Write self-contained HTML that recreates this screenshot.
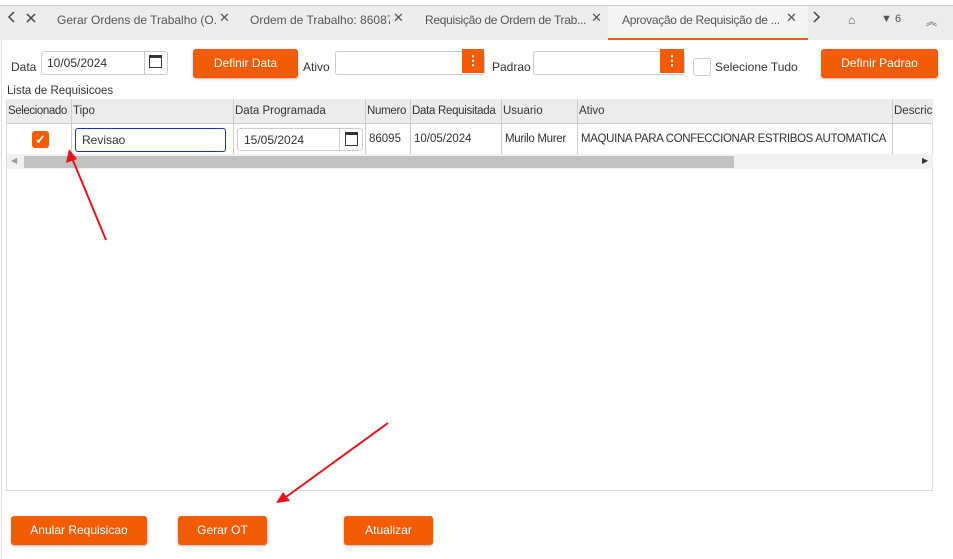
<!DOCTYPE html>
<html><head><meta charset="utf-8"><style>
body{margin:0;width:953px;height:559px;background:#fff;font-family:"Liberation Sans",sans-serif;font-size:12px;color:#333;position:relative;overflow:hidden}
.a{position:absolute}
.tab{position:absolute;top:13px;font-size:12px;color:#555;white-space:nowrap}
.x{position:absolute;top:10px;font-size:13px;color:#555}
.btn{position:absolute;background:#f25c05;color:#fff;border-radius:3px;text-align:center;font-size:12px;box-shadow:0 1px 2px rgba(0,0,0,.3)}
.inp{position:absolute;border:1px solid #ccc;border-radius:3px;background:#fff}
.dots{position:absolute;background:#f25c05;color:#fff;font-weight:bold;text-align:center;font-size:13px}
.th{position:absolute;top:99px;height:25px;line-height:25px;border-right:1px solid #ccc;font-size:11.5px;color:#333;overflow:hidden;white-space:nowrap;padding-left:1px;box-sizing:border-box}
.td{position:absolute;top:124px;height:30px;line-height:30px;border-right:1px solid #ccc;font-size:11.5px;color:#333;overflow:hidden;white-space:nowrap;padding-left:3px;box-sizing:border-box}
</style></head><body>
<div class="a" style="left:0;top:5px;width:953px;height:1px;background:#ccc"></div>
<div class="a" style="left:0;top:6px;width:953px;height:34px;background:#ededed"></div>
<div class="a" style="left:608px;top:6px;width:200px;height:34px;background:#f5f5f5;border-bottom:2px solid #f25c05;box-sizing:border-box"></div>
<div class="a" style="left:808px;top:6px;width:145px;height:32px;background:#ececec"></div>
<svg class="a" style="left:0;top:0" width="953" height="40"><g stroke="#444" stroke-width="1.5" fill="none">
<path d="M14 12 L9 17 L14 22"/><path d="M27 14 L35 22 M35 14 L27 22"/>
<path d="M814 12 L819 17 L814 22"/></g></svg>
<div class="tab" style="left:57px;width:160px;overflow:hidden">Gerar Ordens de Trabalho (O...</div><div class="x" style="left:219px">✕</div>
<div class="tab" style="left:250px;width:140px;overflow:hidden">Ordem de Trabalho: 86087</div><div class="x" style="left:393px">✕</div>
<div class="tab" style="left:425px;width:162px;overflow:hidden;letter-spacing:-0.3px">Requisição de Ordem de Trab...</div><div class="x" style="left:591px">✕</div>
<div class="tab" style="left:622px;width:162px;overflow:hidden;letter-spacing:-0.3px">Aprovação de Requisição de ...</div><div class="x" style="left:786px">✕</div>
<div class="tab" style="left:848px;font-size:12px">⌂</div>
<div class="tab" style="left:881px;font-size:11px">▼ 6</div>
<div class="tab" style="left:926px;font-size:11px">︽</div>
<div class="a" style="left:1px;top:40px;width:1px;height:519px;background:#ddd"></div>

<div class="a" style="left:11px;top:60px;font-size:12px">Data</div>
<div class="inp" style="left:41px;top:51px;width:125px;height:22px"><span class="a" style="left:5px;top:4px;font-size:12px">10/05/2024</span><span class="a" style="left:102px;top:0;width:1px;height:22px;background:#ccc"></span><span class="a" style="left:107px;top:3px;width:13px;height:13px;border:1px solid #333;border-top:3px solid #333;box-sizing:border-box"></span></div>
<div class="btn" style="left:193px;top:49px;width:105px;height:29px;line-height:29px">Definir Data</div>
<div class="a" style="left:303px;top:60px;font-size:12px">Ativo</div>
<div class="inp" style="left:335px;top:51px;width:148px;height:22px"></div>
<div class="dots" style="left:462px;top:49px;width:22px;height:24px;line-height:24px">⋮</div>
<div class="a" style="left:492px;top:60px;font-size:12px">Padrao</div>
<div class="inp" style="left:533px;top:51px;width:150px;height:22px"></div>
<div class="dots" style="left:660px;top:49px;width:24px;height:24px;line-height:24px">⋮</div>
<div class="inp" style="left:693px;top:58px;width:16px;height:16px;border-radius:3px"></div>
<div class="a" style="left:715px;top:60px;font-size:12px">Selecione Tudo</div>
<div class="btn" style="left:821px;top:49px;width:117px;height:29px;line-height:29px">Definir Padrao</div>

<div class="a" style="left:7px;top:85px;font-size:11.5px">Lista de Requisicoes</div>
<div class="a" style="left:6px;top:99px;width:927px;height:392px;border:1px solid #ddd;box-sizing:border-box"></div>
<div class="a" style="left:7px;top:99px;width:926px;height:25px;background:#ececec;border-bottom:1px solid #ccc;box-sizing:border-box"></div>
<div class="th" style="left:7px;width:65px;letter-spacing:-0.4px">Selecionado</div>
<div class="th" style="left:72px;width:162px">Tipo</div>
<div class="th" style="left:234px;width:132px">Data Programada</div>
<div class="th" style="left:366px;width:45px;letter-spacing:-0.3px">Numero</div>
<div class="th" style="left:411px;width:91px;letter-spacing:-0.3px">Data Requisitada</div>
<div class="th" style="left:502px;width:76px">Usuario</div>
<div class="th" style="left:578px;width:315px">Ativo</div>
<div class="th" style="left:893px;width:40px;border:none">Descricao</div>
<div class="td" style="left:7px;width:65px"></div>
<div class="a" style="left:32px;top:131px;width:17px;height:17px;background:#f25c05;border-radius:3px;color:#fff;text-align:center;line-height:17px;font-size:13px;font-weight:bold">✓</div>
<div class="td" style="left:72px;width:162px"></div>
<div class="a" style="left:75px;top:128px;width:151px;height:24px;border:1px solid #1a2fd6;border-radius:3px;box-sizing:border-box;font-size:12px;line-height:22px;padding-left:6px">Revisao</div>
<div class="td" style="left:234px;width:132px"></div>
<div class="inp" style="left:237px;top:128px;width:126px;height:23px;box-sizing:border-box"><span class="a" style="left:6px;top:4px;font-size:12px">15/05/2024</span><span class="a" style="left:101px;top:0;width:1px;height:21px;background:#ccc"></span><span class="a" style="left:107px;top:3px;width:13px;height:14px;border:1px solid #333;border-top:3px solid #333;box-sizing:border-box"></span></div>
<div class="td" style="left:366px;width:45px">86095</div>
<div class="td" style="left:411px;width:91px">10/05/2024</div>
<div class="td" style="left:502px;width:76px;letter-spacing:-0.3px">Murilo Murer</div>
<div class="td" style="left:578px;width:315px;letter-spacing:-0.35px">MAQUINA PARA CONFECCIONAR ESTRIBOS AUTOMATICA</div>
<div class="a" style="left:7px;top:154px;width:926px;height:15px;background:#f1f1f1"></div>
<div class="a" style="left:24px;top:156px;width:710px;height:12px;background:#c1c1c1"></div>
<div class="a" style="left:11px;top:156px;font-size:8px;color:#999">◀</div>
<div class="a" style="left:922px;top:156px;font-size:8px;color:#333">▶</div>

<div class="btn" style="left:11px;top:516px;width:136px;height:29px;line-height:29px">Anular Requisicao</div>
<div class="btn" style="left:178px;top:516px;width:89px;height:29px;line-height:29px">Gerar OT</div>
<div class="btn" style="left:344px;top:516px;width:89px;height:29px;line-height:29px">Atualizar</div>

<svg class="a" style="left:0;top:0" width="953" height="559">
<g stroke="#e8141c" stroke-width="2" fill="#e8141c">
<line x1="106" y1="240" x2="72" y2="158"/>
<polygon points="69,149 66,163 77,159" stroke="none"/>
<line x1="388" y1="423" x2="286" y2="497"/>
<polygon points="276,503 290,501 283,492" stroke="none"/>
</g></svg>
</body></html>
